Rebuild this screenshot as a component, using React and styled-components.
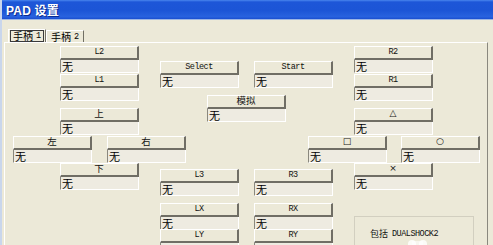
import React from "react";
import styled, { createGlobalStyle } from "styled-components";

const Global = createGlobalStyle`
  html, body { margin: 0; padding: 0; background: #ECE9D8; }
  body { width: 493px; height: 245px; overflow: hidden; }
`;

const CJK = `"Noto Sans CJK SC", "Liberation Sans", sans-serif`;
const MONO = `"Liberation Mono", "Noto Sans CJK SC", monospace`;
const SYM = `"DejaVu Sans", "Liberation Sans", sans-serif`;

const labelFont = {
  cjk: { family: CJK, size: "9.5px", spacing: "0", shift: "-1px" },
  sym: { family: SYM, size: "9px", spacing: "0", shift: "-1px" },
  latin: { family: MONO, size: "8.5px", spacing: "-0.5px", shift: "0" },
};

const Window = styled.div`
  width: 493px;
  height: 245px;
  background: #ECE9D8;
  border-left: 2px solid #C9D6EC;
  box-sizing: border-box;
  display: flex;
  flex-direction: column;
  overflow: hidden;
`;

const TitleBar = styled.div`
  height: 19px;
  margin-left: -2px;
  background: linear-gradient(#4A86EE 0, #1D56D8 2px, #1C55D6 55%, #2862DF 88%, #1A4ECF 100%);
  border-bottom: 1px solid #9DB6E4;
  display: flex;
  align-items: center;
  padding-left: 6px;
  flex: none;
`;

const Title = styled.span`
  color: #fff;
  font-family: "Liberation Sans", "Noto Sans CJK SC", sans-serif;
  font-weight: bold;
  font-size: 12px;
  letter-spacing: 0.2px;
  text-shadow: 1px 1px 0 #0A2A90;
`;

const Tabs = styled.div`
  display: flex;
  align-items: flex-end;
  margin-top: 9px;
  padding-left: 6px;
  height: 13px;
  flex: none;
`;

const Tab = styled.div`
  height: ${(p) => (p.$active ? 13 : 12)}px;
  box-sizing: border-box;
  padding: 0 1px;
  border-left: 1px solid #fff;
  border-top: 1px solid #fff;
  border-right: 1px solid #716F64;
  display: flex;
  align-items: center;
  font-family: ${CJK};
  font-size: 10px;
  line-height: 10px;
  color: #000;
`;

const TabLabel = styled.span`
  padding: 0 2px;
  height: 10px;
  display: flex;
  align-items: center;
  border: 1px solid ${(p) => (p.$focus ? "#3a3a3a" : "transparent")};
`;

const Num = styled.span`
  font-family: ${MONO};
  font-size: 8.5px;
  margin-left: 3px;
`;

const Panel = styled.div`
  margin-left: 2px;
  width: 484px;
  flex: 1;
  border-top: 1px solid #fff;
  border-left: 1px solid #fff;
  border-right: 1px solid #8A887E;
  box-sizing: border-box;
  padding: 3px 0 0 8px;
`;

const Board = styled.div`
  display: grid;
  grid-template-columns: 47px 47px 53px 47px 47px 54px 46px 47px 80px;
  grid-template-rows: 15px 13px 21px 13px 28px 27px 6px 34px 13px 13px 16px;
`;

const Cell = styled.div`
  grid-column-start: ${(p) => p.$col};
  grid-row-start: ${(p) => p.$row};
  align-self: start;
  justify-self: start;
  width: 79px;
  display: flex;
  flex-direction: column;
`;

const KeyButton = styled.div`
  height: 14px;
  box-sizing: border-box;
  background: #ECE9D8;
  border-top: 1px solid #fff;
  border-left: 1px solid #fff;
  border-right: 2px solid #706E65;
  border-bottom: 2px solid #706E65;
  display: flex;
  align-items: center;
  justify-content: center;
  font-family: ${(p) => labelFont[p.$kind].family};
  font-size: ${(p) => labelFont[p.$kind].size};
  letter-spacing: ${(p) => labelFont[p.$kind].spacing};
  line-height: 11px;
  color: #111;
`;

const KeyText = styled.span`
  position: relative;
  top: ${(p) => labelFont[p.$kind].shift};
`;

const Field = styled.div`
  height: 13px;
  box-sizing: border-box;
  background: #EEEBE1;
  border-left: 1px solid #8A887E;
  border-right: 1px solid #fff;
  border-bottom: 1px solid #fff;
  padding-left: 1px;
  font-family: ${CJK};
  font-size: 11px;
  line-height: 12px;
  color: #000;
`;

const GroupBox = styled.div`
  grid-column-start: 8;
  grid-row-start: 10;
  align-self: start;
  justify-self: start;
  width: 120px;
  height: 40px;
  box-sizing: border-box;
  border: 1px solid #D2CFC0;
  padding: 10px 0 0 15px;
  position: relative;
`;

const GroupText = styled.div`
  font-family: ${MONO};
  font-size: 8.5px;
  letter-spacing: -0.5px;
  color: #111;
  display: flex;
  align-items: center;
  gap: 4px;
`;

const Cjk = styled.span`
  font-family: ${CJK};
  font-size: 9px;
  letter-spacing: 0;
`;

const PadPic = styled.svg`
  position: absolute;
  left: 48px;
  top: 21px;
`;

const controls = [
  ["L2", 2, 1], ["L1", 2, 3], ["上", 2, 5, "cjk"], ["左", 1, 6, "cjk"], ["右", 3, 6, "cjk"], ["下", 2, 7, "cjk"],
  ["Select", 4, 2], ["Start", 6, 2], ["模拟", 5, 4, "cjk"],
  ["R2", 8, 1], ["R1", 8, 3], ["△", 8, 5, "sym"], ["□", 7, 6, "sym"], ["○", 9, 6, "sym"], ["×", 8, 7, "sym"],
  ["L3", 4, 8], ["LX", 4, 9], ["LY", 4, 11], ["R3", 6, 8], ["RX", 6, 9], ["RY", 6, 11],
];

function Control({ label, col, row, kind }) {
  return (
    <Cell $col={col} $row={row}>
      <KeyButton $kind={kind}>
        <KeyText $kind={kind}>{label}</KeyText>
      </KeyButton>
      <Field>无</Field>
    </Cell>
  );
}

export default function App() {
  return (
    <>
      <Global />
      <Window>
        <TitleBar>
          <Title>PAD 设置</Title>
        </TitleBar>
        <Tabs>
          <Tab $active>
            <TabLabel $focus>手柄<Num>1</Num></TabLabel>
          </Tab>
          <Tab>
            <TabLabel>手柄<Num>2</Num></TabLabel>
          </Tab>
        </Tabs>
        <Panel>
          <Board>
            {controls.map(([label, col, row, kind]) => (
              <Control key={label} label={label} col={col} row={row} kind={kind || "latin"} />
            ))}
            <GroupBox>
              <GroupText>
                <Cjk>包括</Cjk>DUALSHOCK2
              </GroupText>
              <PadPic width="30" height="12" viewBox="0 0 30 12">
                <circle cx="9" cy="6" r="4" fill="#fff" opacity="0.8" />
                <circle cx="20" cy="6" r="4" fill="#fff" opacity="0.8" />
                <rect x="9" y="3" width="11" height="9" fill="#fff" opacity="0.6" />
              </PadPic>
            </GroupBox>
          </Board>
        </Panel>
      </Window>
    </>
  );
}
